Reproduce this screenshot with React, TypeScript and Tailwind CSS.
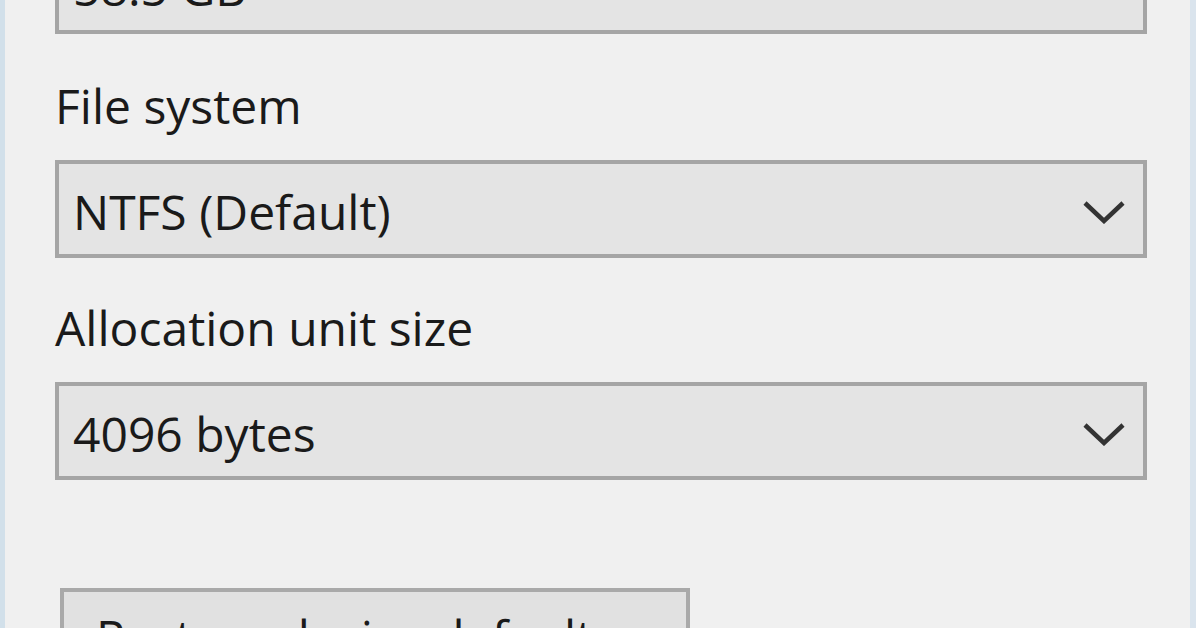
import React from "react";

const font = { fontFamily: '"Open Sans", "Noto Sans", sans-serif' };

function Chevron() {
  return (
    <svg width="42" height="24" viewBox="0 0 42 24" className="shrink-0">
      <polyline points="2,3 21,21 40,3" fill="none" stroke="#333333" strokeWidth="4.5" strokeLinejoin="miter" />
    </svg>
  );
}

function Select({ value, className = "" }: { value: string; className?: string }) {
  return (
    <div
      className={`h-[98px] shrink-0 border-[4px] border-[#a5a5a5] bg-[#e4e4e4] flex items-center pl-[14px] pr-[18px] pt-[6px] ${className}`}
    >
      <span className="flex-1 text-[48px] leading-[64px] text-[#1a1a1a]">{value}</span>
      <Chevron />
    </div>
  );
}

export default function App() {
  return (
    <div className="w-[1196px] h-[628px] overflow-hidden bg-[#f0f0f0] flex" style={font}>
      <div className="w-[5px] shrink-0 bg-[#d2e0ea]" />
      <div className="flex-1 pl-[50px] pr-[43px] flex flex-col">
        <Select value="58.5 GB" className="mt-[-64px]" />
        <div className="mt-[40px] shrink-0 text-[48px] leading-[64px] text-[#1a1a1a]">File system</div>
        <Select value="NTFS (Default)" className="mt-[22px]" />
        <div className="mt-[38px] shrink-0 text-[48px] leading-[64px] text-[#1a1a1a]">Allocation unit size</div>
        <Select value="4096 bytes" className="mt-[22px]" />
        <div className="mt-[108px] ml-[5px] w-[630px] h-[98px] shrink-0 border-[4px] border-[#a9a9a9] bg-[#e1e1e1] flex items-start pl-[32px] pt-[13px]">
          <span className="text-[48px] leading-[64px] text-[#1a1a1a] whitespace-nowrap">Restore device defaults</span>
        </div>
      </div>
      <div className="w-[6px] shrink-0 bg-[#dae4ed]" />
    </div>
  );
}
